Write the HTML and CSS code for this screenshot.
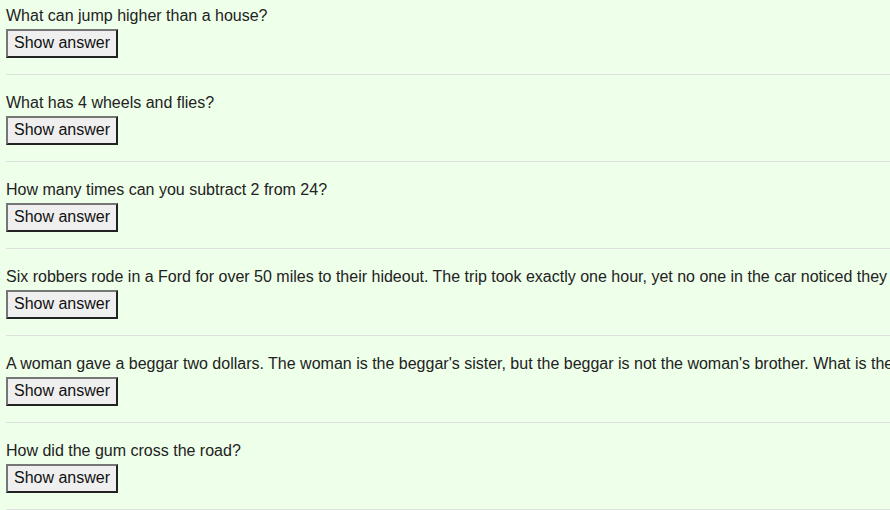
FILE: index.html
```html
<!DOCTYPE html>
<html lang="en">
<head>
<meta charset="utf-8">
<title>Riddles</title>
<link rel="stylesheet" href="styles.css">
</head>
<body>
<main class="riddles">
  <section class="riddle">
    <div class="question">What can jump higher than a house?</div>
    <button class="reveal" type="button">Show answer</button>
  </section>
  <section class="riddle">
    <div class="question">What has 4 wheels and flies?</div>
    <button class="reveal" type="button">Show answer</button>
  </section>
  <section class="riddle">
    <div class="question">How many times can you subtract 2 from 24?</div>
    <button class="reveal" type="button">Show answer</button>
  </section>
  <section class="riddle">
    <div class="question">Six robbers rode in a Ford for over 50 miles to their hideout. The trip took exactly one hour, yet no one in the car noticed they were being followed. How is that possible?</div>
    <button class="reveal" type="button">Show answer</button>
  </section>
  <section class="riddle">
    <div class="question">A woman gave a beggar two dollars. The woman is the beggar's sister, but the beggar is not the woman's brother. What is their relationship?</div>
    <button class="reveal" type="button">Show answer</button>
  </section>
  <section class="riddle">
    <div class="question">How did the gum cross the road?</div>
    <button class="reveal" type="button">Show answer</button>
  </section>
</main>
</body>
</html>
```
FILE: styles.css
```css
html {
  overflow: hidden;
  background: #eeffea;
}
body {
  margin: 0;
  padding: 6px 0 0 6px;
  background: #eeffea;
  font-family: "Liberation Sans", Arial, sans-serif;
  font-size: 16px;
  color: #222;
}
.riddles {
  display: flex;
  flex-direction: column;
  gap: 18px;
}
.riddle {
  display: flex;
  flex-direction: column;
  align-items: flex-start;
  gap: 4px;
  padding-bottom: 16px;
  border-bottom: 1px solid #dde0dd;
}
.question {
  white-space: nowrap;
  line-height: 19px;
}
.reveal {
  font-family: "Liberation Sans", Arial, sans-serif;
  font-size: 16px;
  line-height: 19px;
  color: #111;
  background: #efefef;
  padding: 2px 6px 4px;
  border: 2px solid;
  border-color: #767676 #222 #222 #767676;
  margin: 0;
  border-radius: 0;
}
```
